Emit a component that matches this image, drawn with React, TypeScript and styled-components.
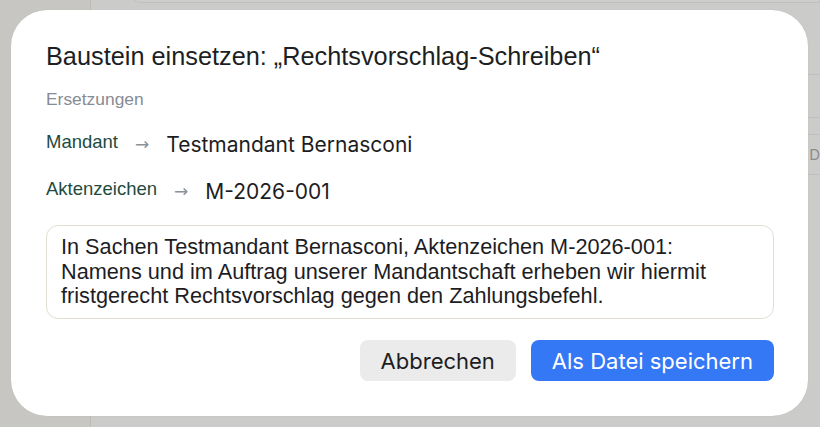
import styled, { createGlobalStyle } from "styled-components";

const GlobalStyle = createGlobalStyle`
  html, body {
    margin: 0;
    padding: 0;
    width: 820px;
    height: 427px;
    overflow: hidden;
    background: #cbcbca;
  }
  * { box-sizing: border-box; }
`;

const Screen = styled.div`
  position: relative;
  width: 820px;
  height: 427px;
  display: flex;
  background: #cbcbca;
  overflow: hidden;
`;

const Sidebar = styled.div`
  width: 91px;
  background: #c7c6c2;
  border-right: 1px solid #bdbcb8;
`;

const Main = styled.div`
  flex: 1;
  display: flex;
  flex-direction: column;
  padding: 0 0 0 38px;
`;

const TopCard = styled.div`
  height: 13px;
  margin-top: -10px;
  background: #cdcdcd;
  border: 1px solid #bfbfbf;
  border-radius: 0 0 0 12px;
`;

const Rows = styled.div`
  display: flex;
  flex-direction: column;
`;

const BgRow = styled.div<{ $h: number }>`
  height: ${(p) => p.$h}px;
  border-bottom: 1px solid #c0c0c0;
  display: flex;
  justify-content: flex-end;
  align-items: center;
  font-family: Inter, sans-serif;
  font-size: 15px;
  color: #8c8c8c;
`;

const Dialog = styled.div`
  position: absolute;
  top: 10px;
  left: 11px;
  width: 797px;
  height: 406px;
  background: #ffffff;
  border-radius: 36px;
  box-shadow: 0 0 1px rgba(0, 0, 0, 0.12);
  padding: 32px 34px 35px 35px;
  display: flex;
  flex-direction: column;
`;

const Title = styled.h2`
  margin: 0;
  font-family: "Liberation Sans", Arial, sans-serif;
  font-weight: 400;
  font-size: 25.3px;
  line-height: 28px;
  color: #1c1f24;
`;

const Section = styled.div`
  margin-top: 19px;
  font-family: "Liberation Sans", Arial, sans-serif;
  font-size: 17.4px;
  line-height: 20px;
  color: #868b94;
`;

const Replacements = styled.div`
  margin-top: 21px;
  display: flex;
  flex-direction: column;
  gap: 19px;
`;

const Row = styled.div`
  display: flex;
  align-items: center;
  height: 28px;
`;

const Label = styled.span`
  font-family: "Liberation Sans", Arial, sans-serif;
  font-size: 18.5px;
  color: #1e4b40;
  position: relative;
  top: -2px;
`;

const Arrow = styled.span`
  margin: 0 17px;
  font-family: "DejaVu Sans", sans-serif;
  font-size: 17px;
  color: #8d9097;
`;

const Value = styled.span`
  font-family: Inter, "Noto Sans", sans-serif;
  font-size: 21px;
  color: #1d1d1f;
`;

const Body = styled.div`
  margin-top: 20px;
  height: 95px;
  border: 1px solid #e2ded2;
  border-radius: 12px;
  padding: 9px 14px;
  font-family: "Liberation Sans", Arial, sans-serif;
  font-size: 21.7px;
  line-height: 24.5px;
  color: #1d1d1f;
`;

const Actions = styled.div`
  margin-top: 21px;
  display: flex;
  justify-content: flex-end;
  gap: 15px;
`;

const Button = styled.button<{ $primary?: boolean }>`
  height: 41px;
  padding: 0 21px;
  border: none;
  border-radius: 8px;
  font-family: Inter, "Noto Sans", sans-serif;
  font-size: 22px;
  background: ${(p) => (p.$primary ? "#3478f6" : "#ebebeb")};
  color: ${(p) => (p.$primary ? "#ffffff" : "#1d1d1f")};
  cursor: pointer;
`;

const replacements = [
  { label: "Mandant", value: "Testmandant Bernasconi" },
  { label: "Aktenzeichen", value: "M-2026-001" },
];

export default function App() {
  return (
    <>
      <GlobalStyle />
      <Screen>
        <Sidebar />
        <Main>
          <TopCard />
          <Rows>
            <BgRow $h={72} />
            <BgRow $h={43} />
            <BgRow $h={17} />
            <BgRow $h={40}>D</BgRow>
          </Rows>
        </Main>
        <Dialog>
          <Title>Baustein einsetzen: „Rechtsvorschlag-Schreiben“</Title>
          <Section>Ersetzungen</Section>
          <Replacements>
            {replacements.map((r) => (
              <Row key={r.label}>
                <Label>{r.label}</Label>
                <Arrow>→</Arrow>
                <Value>{r.value}</Value>
              </Row>
            ))}
          </Replacements>
          <Body>
            In Sachen Testmandant Bernasconi, Aktenzeichen M-2026-001:
            <br />
            Namens und im Auftrag unserer Mandantschaft erheben wir hiermit
            fristgerecht Rechtsvorschlag gegen den Zahlungsbefehl.
          </Body>
          <Actions>
            <Button>Abbrechen</Button>
            <Button $primary>Als Datei speichern</Button>
          </Actions>
        </Dialog>
      </Screen>
    </>
  );
}
